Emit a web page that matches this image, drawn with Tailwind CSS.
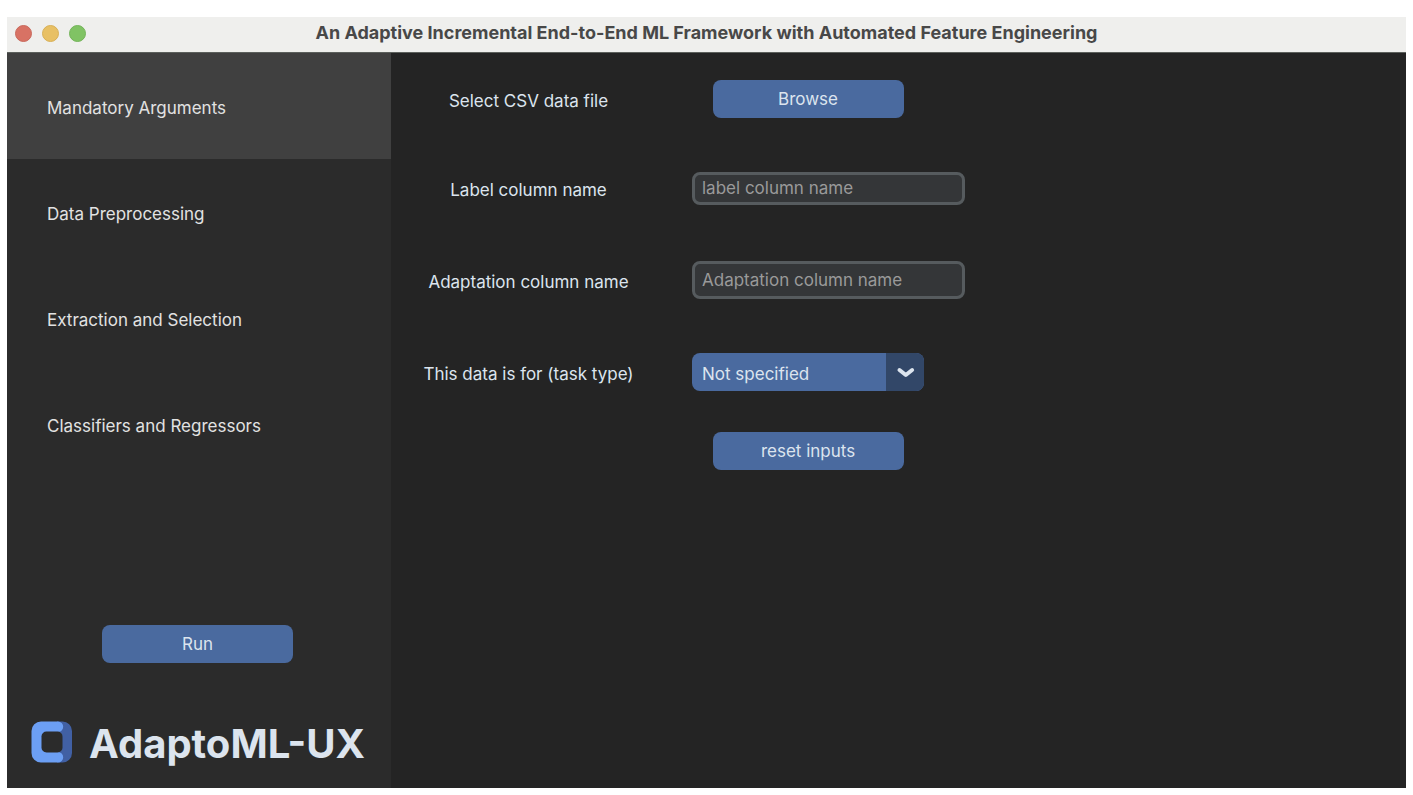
<!DOCTYPE html>
<html lang="en">
<head>
<meta charset="utf-8">
<meta name="viewport" content="width=device-width, initial-scale=1">
<title>AdaptoML-UX</title>
<script src="https://cdn.jsdelivr.net/npm/@tailwindcss/browser@4"></script>
</head>
<body class="flex min-h-screen bg-white px-[7px] pt-[17px] pb-[7px] font-['Inter',sans-serif] text-[17px] leading-6 text-[#dce4ee]">
<div class="flex flex-1 flex-col bg-[#242424]">
  <header class="grid grid-cols-[1fr_auto_1fr] items-center border-b border-[#5c605c] bg-[#efefed] px-2 pt-1 pb-[7px]">
    <div class="flex gap-[10px]">
      <button type="button" aria-label="Close" class="size-[17px] rounded-full border border-[#c9695c] bg-[#d87264]"></button>
      <button type="button" aria-label="Minimize" class="size-[17px] rounded-full border border-[#d8b057] bg-[#e8c064]"></button>
      <button type="button" aria-label="Zoom" class="size-[17px] rounded-full border border-[#74b45a] bg-[#80c364]"></button>
    </div>
    <h1 class="text-[18px] leading-6 font-bold text-[#484848]">An Adaptive Incremental End-to-End ML Framework with Automated Feature Engineering</h1>
  </header>
  <div class="flex flex-1">
    <aside class="flex w-96 flex-col bg-[#2b2b2b]">
      <nav class="flex flex-col text-[#e2e2e2]">
        <button type="button" aria-current="page" class="h-[106px] bg-[#404040] px-10 pt-1 text-left">Mandatory Arguments</button>
        <button type="button" class="h-[106px] px-10 pt-1 text-left">Data Preprocessing</button>
        <button type="button" class="h-[106px] px-10 pt-1 text-left">Extraction and Selection</button>
        <button type="button" class="h-[106px] px-10 pt-1 text-left">Classifiers and Regressors</button>
      </nav>
      <button type="button" class="mt-auto ml-[95px] h-[38px] w-[191px] rounded-lg bg-[#4a6a9f]">Run</button>
      <div class="mt-[51px] mb-[18px] flex items-center gap-4 pl-6">
        <svg class="size-[42px]" viewBox="0 0 42 42" aria-hidden="true">
          <path fill="#4160a4" d="M26 0.500h5.500a9.500 9.500 0 0 1 9.500 9.500v22a9.500 9.500 0 0 1-9.500 9.500H26z"/>
          <path fill="#6c9ff4" d="M10 0.500h17a5.200 5.200 0 0 1 0 10.400H16a5 5 0 0 0-5 5v10.200a5 5 0 0 0 5 5h11a5.200 5.200 0 0 1 0 10.400H10a9.500 9.500 0 0 1-9.500-9.500V10A9.500 9.500 0 0 1 10 0.500z"/>
          <rect x="10.500" y="10.500" width="21" height="21" rx="5" fill="#2b2b2b"/>
        </svg>
        <span class="pt-1 text-[40px] leading-[52px] font-bold">AdaptoML-UX</span>
      </div>
    </aside>
    <main class="flex-1">
      <form class="grid grid-cols-[275px_auto] grid-rows-[92px_86px_98px_86px_72px] items-center justify-start gap-x-[26px]">
        <label for="browse" class="pt-1 text-center">Select CSV data file</label>
        <div class="flex w-[232px] justify-center">
          <button id="browse" type="button" class="h-[38px] w-[191px] rounded-lg bg-[#4a6a9f]">Browse</button>
        </div>
        <label for="label-column" class="pt-1 text-center">Label column name</label>
        <input id="label-column" type="text" placeholder="label column name" class="h-[33px] w-[273px] rounded-lg border-3 border-[#565b5e] bg-[#343638] px-[7px] placeholder:text-[#9a9a9a]">
        <label for="adaptation-column" class="pt-1 text-center">Adaptation column name</label>
        <input id="adaptation-column" type="text" placeholder="Adaptation column name" class="h-[38px] w-[273px] rounded-lg border-3 border-[#565b5e] bg-[#343638] px-[7px] placeholder:text-[#9a9a9a]">
        <label for="task-type" class="pt-1 text-center">This data is for (task type)</label>
        <div class="relative w-[232px]">
          <select id="task-type" class="block h-[38px] w-full appearance-none rounded-lg bg-[#4a6a9f] px-[10px] pt-1">
            <option>Not specified</option>
          </select>
          <span class="pointer-events-none absolute inset-y-0 right-0 flex w-[38px] items-center justify-center rounded-r-lg bg-[#324768]">
            <svg class="h-3 w-5" viewBox="0 0 20 12" fill="none" stroke="#dce4ee" stroke-width="4" stroke-linecap="round" stroke-linejoin="round" aria-hidden="true"><path d="M4.500 4l6.300 5 6.300-5"/></svg>
          </span>
        </div>
        <div class="col-start-2 flex w-[232px] justify-center">
          <button type="reset" class="h-[38px] w-[191px] rounded-lg bg-[#4a6a9f]">reset inputs</button>
        </div>
      </form>
    </main>
  </div>
</div>
</body>
</html>
